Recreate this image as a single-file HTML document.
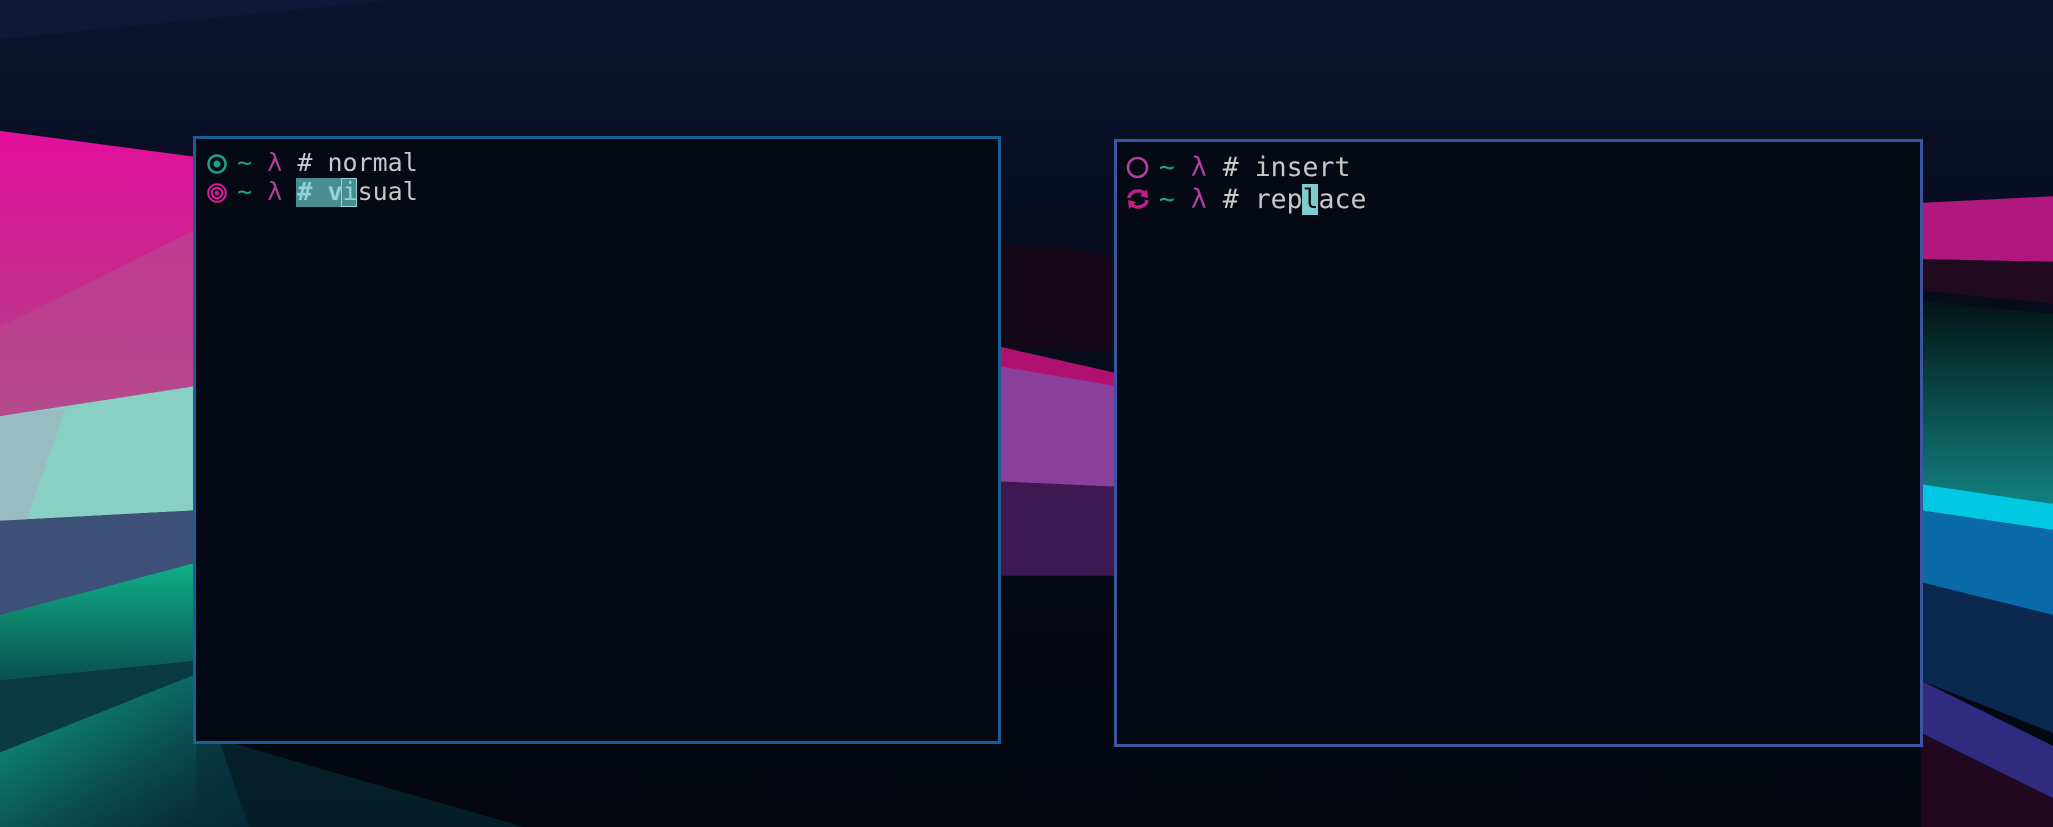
<!DOCTYPE html>
<html><head><meta charset="utf-8"><style>
html,body{margin:0;padding:0;width:2053px;height:827px;overflow:hidden;background:#070b18;}
#bg{position:absolute;left:0;top:0;width:2053px;height:827px;}
.win{position:absolute;background:#050913;box-sizing:border-box;}
.t{position:absolute;font-family:"DejaVu Sans Mono","Liberation Mono",monospace;font-size:25px;line-height:29px;white-space:pre;color:#c8c8c8;}
.r{font-size:26.5px;line-height:31.5px;}
.g{color:#1aa58a}.m{color:#b0409a}
</style></head><body>
<svg id="bg" viewBox="0 0 1568 632" preserveAspectRatio="none" xmlns="http://www.w3.org/2000/svg">
<defs>
<linearGradient id="bgv" x1="0" y1="0" x2="0" y2="1">
<stop offset="0" stop-color="#0c1530"/><stop offset="0.3" stop-color="#070d1e"/><stop offset="0.7" stop-color="#050914"/><stop offset="1" stop-color="#04070e"/></linearGradient>
<linearGradient id="pk" x1="0" y1="0" x2="0" y2="1"><stop offset="0" stop-color="#e40f9c"/><stop offset="0.5" stop-color="#c7288f"/><stop offset="1" stop-color="#b04c8c"/></linearGradient>
<linearGradient id="gr" x1="0" y1="0" x2="0" y2="1"><stop offset="0" stop-color="#10b088"/><stop offset="1" stop-color="#0a5050"/></linearGradient>
<linearGradient id="gb" x1="0" y1="0" x2="1" y2="1"><stop offset="0" stop-color="#0fa283"/><stop offset="0.6" stop-color="#0a4a50"/><stop offset="1" stop-color="#06202c"/></linearGradient>
<linearGradient id="rt" x1="0" y1="0" x2="0" y2="1"><stop offset="0" stop-color="#041414"/><stop offset="1" stop-color="#128080"/></linearGradient>
</defs>
<rect width="1568" height="632" fill="url(#bgv)"/>
<polygon points="0,30 300,0 0,0" fill="#141a40" opacity="0.6"/>
<!-- left -->
<polygon points="0,100 150,120 150,300 0,318" fill="url(#pk)"/>
<polygon points="0,250 150,175 150,300 0,318" fill="#b84a8e" opacity="0.6"/>
<polygon points="0,318 150,295 150,390 0,398" fill="#88d0c4"/>
<polygon points="0,318 50,312 20,398 0,398" fill="#a0b4c0" opacity="0.7"/>
<polygon points="0,398 150,390 150,440 0,470" fill="#3c5078"/>
<polygon points="0,470 150,430 150,505 0,520" fill="url(#gr)"/>
<polygon points="0,520 150,505 150,515 0,575" fill="#0a3a44"/>
<polygon points="0,575 150,515 190,632 0,632" fill="url(#gb)"/>
<polygon points="150,560 400,632 150,632" fill="#06303a" opacity="0.6"/>
<!-- middle -->
<polygon points="764,185 852,195 852,270 764,265" fill="#140818"/>
<polygon points="764,265 852,285 852,300 764,285" fill="#b01070"/>
<polygon points="764,280 852,295 852,372 764,368" fill="#8a409a"/>
<polygon points="764,368 852,372 852,440 764,440" fill="#3e1850"/>
<!-- right -->
<polygon points="1467,155 1568,150 1568,200 1467,198" fill="#b01880"/>
<polygon points="1467,198 1568,200 1568,232 1467,222" fill="#200a20"/>
<polygon points="1467,230 1568,240 1568,385 1467,370" fill="url(#rt)"/>
<polygon points="1467,370 1568,385 1568,405 1467,390" fill="#00c8e0"/>
<polygon points="1467,390 1568,405 1568,470 1467,445" fill="#0a6aa8"/>
<polygon points="1467,445 1568,470 1568,560 1467,520" fill="#0a2850"/>
<polygon points="1467,520 1568,570 1568,610 1467,560" fill="#302a80"/>
<polygon points="1467,560 1568,610 1568,632 1467,632" fill="#200820"/>
</svg>

<div class="win" style="left:193px;top:136px;width:808px;height:608px;border:3px solid #1a5e98;"></div>
<div class="win" style="left:1114px;top:139px;width:809px;height:608px;border:3px solid #3d55a0;"></div>

<!-- left text -->
<svg style="position:absolute;left:206px;top:153px" width="22" height="22" viewBox="0 0 22 22"><circle cx="11" cy="11" r="8.5" fill="none" stroke="#1aa58a" stroke-width="2.5"/><circle cx="11" cy="11" r="3.5" fill="#1aa58a"/></svg>
<svg style="position:absolute;left:206px;top:182px" width="22" height="22" viewBox="0 0 22 22"><circle cx="11" cy="11" r="8.8" fill="none" stroke="#e0189a" stroke-width="2"/><circle cx="11" cy="11" r="5.3" fill="none" stroke="#e0189a" stroke-width="2"/><circle cx="11" cy="11" r="2.2" fill="#e0189a"/></svg>
<div style="position:absolute;left:296px;top:178px;width:60px;height:29px;background:#4b8c92"></div>
<div style="position:absolute;left:341px;top:178px;width:14px;height:27px;border:1px solid #8fd6d8"></div>
<div class="t" style="left:207px;top:148px">  <span class="g">~</span> <span class="m">λ</span> # normal</div>
<div class="t" style="left:207px;top:177px">  <span class="g">~</span> <span class="m">λ</span> <span style="color:#8fd6d8;font-weight:bold"># v</span><span style="color:#8fd6d8">i</span>sual</div>

<!-- right text -->
<svg style="position:absolute;left:1126px;top:156px" width="23" height="23" viewBox="0 0 23 23"><circle cx="11.5" cy="11.5" r="9.5" fill="none" stroke="#b0409a" stroke-width="2.6"/></svg>
<svg style="position:absolute;left:1126px;top:188px" width="24" height="22" viewBox="0 0 24 22"><path d="M3 10 A9 8 0 0 1 19 6" fill="none" stroke="#c02088" stroke-width="3.5"/><polygon points="21,1 22,10 14,8" fill="#c02088"/><path d="M21 12 A9 8 0 0 1 5 16" fill="none" stroke="#c02088" stroke-width="3.5"/><polygon points="3,21 2,12 10,14" fill="#c02088"/></svg>
<div style="position:absolute;left:1302px;top:184px;width:16px;height:31px;background:#80cccc"></div>
<div class="t r" style="left:1127px;top:152px">  <span class="g">~</span> <span class="m">λ</span> # insert</div>
<div class="t r" style="left:1127px;top:184px">  <span class="g">~</span> <span class="m">λ</span> # rep<span style="color:#050913">l</span>ace</div>
</body></html>
